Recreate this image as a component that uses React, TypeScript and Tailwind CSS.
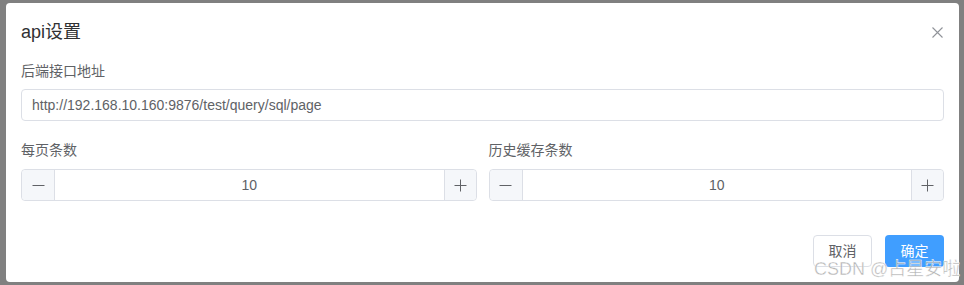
import { useState } from "react";

const font = { fontFamily: '"Liberation Sans", Arial, "Noto Sans CJK SC", sans-serif' };

function NumberBox({ initial }: { initial: number }) {
  const [value, setValue] = useState(initial);

  return (
    <div className="flex h-8 w-full rounded-[4px] border border-[#dcdfe6] bg-white">
      <button
        onClick={() => setValue((v) => Math.max(1, v - 1))}
        className="flex w-[33px] items-center justify-center rounded-l-[4px] border-r border-[#dcdfe6] bg-[#f5f7fa] text-[#606266]"
      >
        <svg width="13" height="13" viewBox="0 0 13 13">
          <path d="M0.5 6.5h12" stroke="currentColor" strokeWidth="1" />
        </svg>
      </button>
      <div className="flex flex-1 items-center justify-center text-sm text-[#606266]">{value}</div>
      <button
        onClick={() => setValue((v) => v + 1)}
        className="flex w-[32px] items-center justify-center rounded-r-[4px] border-l border-[#dcdfe6] bg-[#f5f7fa] text-[#606266]"
      >
        <svg width="13" height="13" viewBox="0 0 13 13">
          <path d="M0.5 6.5h12M6.5 0.5v12" stroke="currentColor" strokeWidth="1" />
        </svg>
      </button>
    </div>
  );
}

export default function App() {
  return (
    <div className="h-[285px] w-[964px] overflow-hidden bg-[#808080] pl-[6px] pt-[3px]" style={font}>
      <div className="relative h-[279px] w-[953px] rounded-[4px] bg-white px-[15px]">
        <div className="flex items-center justify-between pt-[17px]">
          <span className="text-[18px] leading-6 text-[#303133]">api设置</span>
          <button className="mr-[1px] text-[#909399]">
            <svg width="11" height="11" viewBox="0 0 11 11">
              <path d="M0.5 0.5l10 10M10.5 0.5l-10 10" stroke="currentColor" strokeWidth="1.1" />
            </svg>
          </button>
        </div>

        <div className="mt-4 text-sm leading-[22px] text-[#606266]">后端接口地址</div>
        <input
          defaultValue="http://192.168.10.160:9876/test/query/sql/page"
          className="mt-[7px] h-8 w-full rounded-[4px] border border-[#dcdfe6] px-[10px] text-sm text-[#606266] outline-none"
        />

        <div className="mt-[18px] grid grid-cols-2 gap-x-3">
          <div>
            <div className="text-sm leading-[22px] text-[#606266]">每页条数</div>
            <div className="mt-2">
              <NumberBox initial={10} />
            </div>
          </div>
          <div>
            <div className="text-sm leading-[22px] text-[#606266]">历史缓存条数</div>
            <div className="mt-2">
              <NumberBox initial={10} />
            </div>
          </div>
        </div>

        <div className="mt-[34px] flex justify-end gap-[13px]">
          <button className="h-8 w-[59px] rounded-[4px] border border-[#dcdfe6] bg-white text-sm text-[#606266]">
            取消
          </button>
          <button className="h-8 w-[59px] rounded-[4px] bg-[#409eff] text-sm text-white">确定</button>
        </div>

        <div
          className="pointer-events-none absolute left-[808px] top-[253px] whitespace-nowrap text-[18px] text-[#9a9a9a]/75"
          style={{ WebkitTextStroke: "0.4px white" }}
        >
          CSDN @占星安啦
        </div>
      </div>
    </div>
  );
}
